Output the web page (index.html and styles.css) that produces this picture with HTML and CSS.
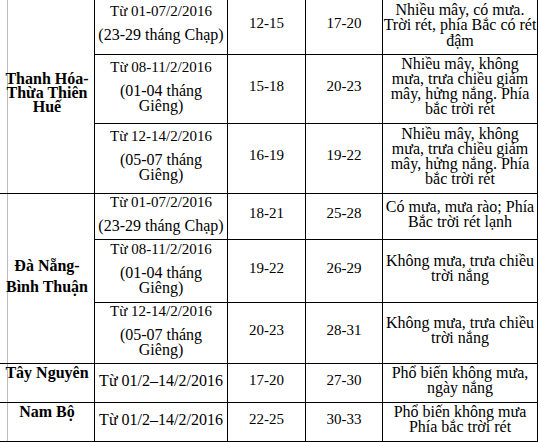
FILE: index.html
```html
<!DOCTYPE html>
<html lang="vi">
<head>
<meta charset="utf-8">
<title>Dự báo nhiệt độ Tết</title>
<link rel="stylesheet" href="styles.css">
</head>
<body>
<div class="sheet">
<table class="forecast">
  <colgroup>
    <col class="c-region">
    <col class="c-date">
    <col class="c-min">
    <col class="c-max">
    <col class="c-desc">
  </colgroup>
  <tbody>
    <tr class="r1">
      <td class="region" rowspan="3"><div class="rg-tight">Thanh Hóa-<br>Thừa Thiên<br>Huế</div></td>
      <td class="date"><div class="d1">Từ 01-07/2/2016</div><div class="d2">(23-29 tháng Chạp)</div></td>
      <td class="num">12-15</td>
      <td class="num">17-20</td>
      <td class="desc first">Nhiều mây, có mưa.<br>Trời rét, phía Bắc có rét<br>đậm</td>
    </tr>
    <tr class="r2">
      <td class="date"><div class="d1">Từ 08-11/2/2016</div><div class="d2">(01-04 tháng<br>Giêng)</div></td>
      <td class="num">15-18</td>
      <td class="num">20-23</td>
      <td class="desc">Nhiều mây, không<br>mưa, trưa chiều giảm<br>mây, hửng nắng. Phía<br>bắc trời rét</td>
    </tr>
    <tr class="r3">
      <td class="date"><div class="d1">Từ 12-14/2/2016</div><div class="d2">(05-07 tháng<br>Giêng)</div></td>
      <td class="num">16-19</td>
      <td class="num">19-22</td>
      <td class="desc">Nhiều mây, không<br>mưa, trưa chiều giảm<br>mây, hửng nắng. Phía<br>bắc trời rét</td>
    </tr>
    <tr class="r4">
      <td class="region" rowspan="3"><div class="rg-loose">Đà Nẵng-<br>Bình Thuận</div></td>
      <td class="date"><div class="d1">Từ 01-07/2/2016</div><div class="d2">(23-29 tháng Chạp)</div></td>
      <td class="num">18-21</td>
      <td class="num">25-28</td>
      <td class="desc">Có mưa, mưa rào; Phía<br>Bắc trời rét lạnh</td>
    </tr>
    <tr class="r5">
      <td class="date"><div class="d1">Từ 08-11/2/2016</div><div class="d2">(01-04 tháng<br>Giêng)</div></td>
      <td class="num">19-22</td>
      <td class="num">26-29</td>
      <td class="desc">Không mưa, trưa chiều<br>trời nắng</td>
    </tr>
    <tr class="r6">
      <td class="date"><div class="d1">Từ 12-14/2/2016</div><div class="d2">(05-07 tháng<br>Giêng)</div></td>
      <td class="num">20-23</td>
      <td class="num">28-31</td>
      <td class="desc">Không mưa, trưa chiều<br>trời nắng</td>
    </tr>
    <tr class="r7">
      <td class="region top">Tây Nguyên</td>
      <td class="date single">Từ 01/2–14/2/2016</td>
      <td class="num">17-20</td>
      <td class="num">27-30</td>
      <td class="desc">Phổ biến không mưa,<br>ngày nắng</td>
    </tr>
    <tr class="r8">
      <td class="region top">Nam Bộ</td>
      <td class="date single">Từ 01/2–14/2/2016</td>
      <td class="num">22-25</td>
      <td class="num">30-33</td>
      <td class="desc">Phổ biến không mưa<br>Phía bắc trời rét</td>
    </tr>
  </tbody>
</table>
</div>
</body>
</html>
```

FILE: styles.css
```css
html, body {
  margin: 0;
  padding: 0;
  background: #fff;
  overflow: hidden;
}

.sheet {
  position: relative;
  width: 538px;
  height: 442px;
  overflow: hidden;
}

.sheet::before {
  content: "";
  position: absolute;
  left: 7px;
  top: 0;
  bottom: 0;
  width: 1px;
  background: #bdbdbd;
}

.forecast {
  position: relative;
  border-collapse: separate;
  border-spacing: 0;
  table-layout: fixed;
  width: 539px;
  margin: -3px 0 0 -1px;
  border-top: 1px solid #000;
  border-left: 1px solid #000;
  font-family: "Liberation Serif", "Times New Roman", serif;
  color: #000;
}

.c-region { width: 95px; }
.c-date { width: 133px; }
.c-min { width: 78px; }
.c-max { width: 77px; }
.c-desc { width: 155px; }

.forecast td {
  box-sizing: border-box;
  border-right: 1px solid #000;
  border-bottom: 1px solid #000;
  padding: 0 0 6px 0;
  text-align: center;
  vertical-align: middle;
  white-space: nowrap;
}

.r1 { height: 57px; }
.r2 { height: 69px; }
.r3 { height: 70px; }
.r4 { height: 46px; }
.r5 { height: 63px; }
.r6 { height: 61px; }
.r7 { height: 39px; }
.r8 { height: 39px; }

.region {
  font-weight: bold;
  font-size: 16px;
  line-height: 14px;
}

.rg-loose {
  line-height: 21px;
}

.region.top {
  vertical-align: top;
  padding: 1px 0 0 0;
  line-height: 15px;
}

.d1 {
  font-size: 15px;
  line-height: 15px;
  margin-bottom: 8px;
}

.d2 {
  font-size: 16px;
  line-height: 15px;
}

.date.single {
  font-size: 16px;
  line-height: 15px;
}

.num {
  font-size: 15px;
  line-height: 15px;
}

.desc {
  font-size: 16px;
  line-height: 15px;
}

.desc.first {
  padding-bottom: 2px;
  line-height: 15.5px;
}
```
